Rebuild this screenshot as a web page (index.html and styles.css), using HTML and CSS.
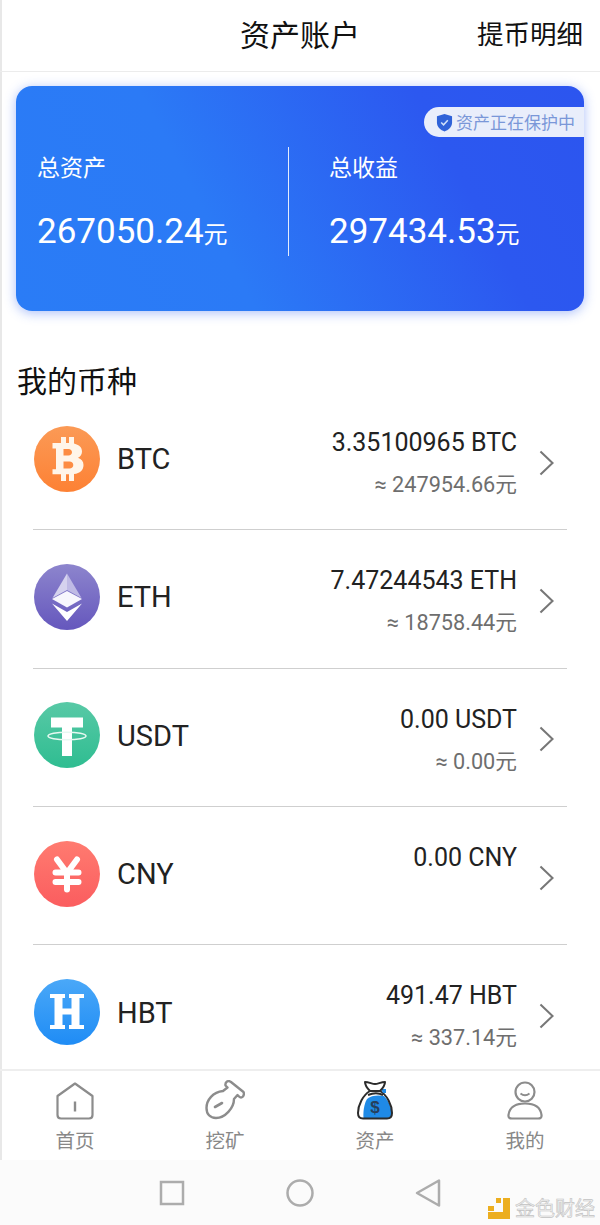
FILE: index.html
```html
<!DOCTYPE html>
<html lang="zh-CN">
<head>
    <meta charset="UTF-8">
    <meta name="viewport" content="width=device-width, initial-scale=1.0">
    <title>资产账户</title>
    <link rel="stylesheet" href="styles.css">
</head>
<body>
<div class="page">
    <div class="main">
        <header class="top-bar">
            <span></span>
            <h1 class="top-title">资产账户</h1>
            <a class="top-link">提币明细</a>
        </header>

        <section class="summary">
            <div class="guard">
                <svg class="guard-icon" viewBox="0 0 18 20">
                    <path d="M9 1 L17 3.5 V10 C17 15 13 18 9 19.5 C5 18 1 15 1 10 V3.5 Z" fill="#2f62d8"/>
                    <path d="M5.5 10 L8 12.5 L12.5 7.5" fill="none" stroke="#cfe0fa" stroke-width="1.6"/>
                </svg>
                <span>资产正在保护中</span>
            </div>
            <div class="summary-col first">
                <div class="summary-label">总资产</div>
                <div class="summary-value">267050.24<small>元</small></div>
            </div>
            <div class="summary-col second">
                <div class="summary-label">总收益</div>
                <div class="summary-value">297434.53<small>元</small></div>
            </div>
        </section>

        <h2 class="list-title">我的币种</h2>

        <div class="coins">
            <div class="coin">
                <svg class="coin-icon" viewBox="0 0 66 66">
                    <defs><linearGradient id="gBtc" x1="0" y1="0" x2="0" y2="1"><stop offset="0" stop-color="#fb9a56"/><stop offset="1" stop-color="#fd8134"/></linearGradient></defs>
                    <circle cx="33" cy="33" r="33" fill="url(#gBtc)"/>
                    <path d="M27 11h5v6h3v-6h5v6.5c6 1.5 8 4.5 8 8 0 3-1.500 5-4 6.300 3.500 1.200 5.500 3.700 5.500 7.200 0 5-3.500 8.500-9.500 9v7h-5v-6.800h-3V55h-5v-6.800H18.500v-5H22V22.500h-3.500V17H27z" fill="#fff5e9"/>
                    <path d="M29.500 23v6.500h5c2 0 3.500-1.200 3.500-3.200s-1.500-3.300-3.500-3.300zM29.500 35.500V42.500h6c2.200 0 3.800-1.400 3.800-3.500s-1.600-3.500-3.800-3.500z" fill="#fd8c42"/>
                </svg>
                <div class="coin-name">BTC</div>
                <div class="amounts">
                    <div class="amount">3.35100965 BTC</div>
                    <div class="worth">≈ 247954.66元</div>
                </div>
                <svg class="chevron" viewBox="0 0 16 28"><path d="M1.500 1.500 L14.500 14 L1.500 26.500"/></svg>
            </div>

            <div class="coin">
                <svg class="coin-icon" viewBox="0 0 66 66">
                    <defs><linearGradient id="gEth" x1="0" y1="0" x2="0" y2="1"><stop offset="0" stop-color="#8d85cd"/><stop offset="1" stop-color="#6557bd"/></linearGradient></defs>
                    <circle cx="33" cy="33" r="33" fill="url(#gEth)"/>
                    <path d="M33 9.500 L18.500 34 L33 26z" fill="#d5d2ee"/>
                    <path d="M33 9.500 L47.500 34 L33 26z" fill="#bfbae5"/>
                    <path d="M33 27 L18 35 L33 43.500 L48 35z" fill="#f7f6fd"/>
                    <path d="M18 39.500 L33 48 L48 39.500 L33 57z" fill="#fff"/>
                </svg>
                <div class="coin-name">ETH</div>
                <div class="amounts">
                    <div class="amount">7.47244543 ETH</div>
                    <div class="worth">≈ 18758.44元</div>
                </div>
                <svg class="chevron" viewBox="0 0 16 28"><path d="M1.500 1.500 L14.500 14 L1.500 26.500"/></svg>
            </div>

            <div class="coin">
                <svg class="coin-icon" viewBox="0 0 66 66">
                    <defs><linearGradient id="gUsdt" x1="0" y1="0" x2="0" y2="1"><stop offset="0" stop-color="#58c9a6"/><stop offset="1" stop-color="#2fbd91"/></linearGradient></defs>
                    <circle cx="33" cy="33" r="33" fill="url(#gUsdt)"/>
                    <path d="M17 15.500 H49 V25.500 H38 V54 H28 V25.500 H17z" fill="#fff"/>
                    <ellipse cx="33" cy="34" rx="19" ry="3.800" fill="none" stroke="#e6f8f1" stroke-width="1.500"/>
                </svg>
                <div class="coin-name">USDT</div>
                <div class="amounts">
                    <div class="amount">0.00 USDT</div>
                    <div class="worth">≈ 0.00元</div>
                </div>
                <svg class="chevron" viewBox="0 0 16 28"><path d="M1.500 1.500 L14.500 14 L1.500 26.500"/></svg>
            </div>

            <div class="coin">
                <svg class="coin-icon" viewBox="0 0 66 66">
                    <defs><linearGradient id="gCny" x1="0" y1="0" x2="0" y2="1"><stop offset="0" stop-color="#ff7b70"/><stop offset="1" stop-color="#fb5d5f"/></linearGradient></defs>
                    <circle cx="33" cy="33" r="33" fill="url(#gCny)"/>
                    <path d="M23 18.500 L33 32 L43 18.500 M33 32 V48.500 M21.500 31.500 H44.500 M21.500 41 H44.500" fill="none" stroke="#fff" stroke-width="6" stroke-linecap="round"/>
                </svg>
                <div class="coin-name">CNY</div>
                <div class="amounts">
                    <div class="amount">0.00 CNY</div>
                </div>
                <svg class="chevron" viewBox="0 0 16 28"><path d="M1.500 1.500 L14.500 14 L1.500 26.500"/></svg>
            </div>

            <div class="coin">
                <svg class="coin-icon" viewBox="0 0 66 66">
                    <defs><linearGradient id="gHbt" x1="0" y1="0" x2="0" y2="1"><stop offset="0" stop-color="#4aa8f8"/><stop offset="1" stop-color="#1f8cf5"/></linearGradient></defs>
                    <circle cx="33" cy="33" r="33" fill="url(#gHbt)"/>
                    <path d="M16 15 H31 V19 H28.500 V29.500 H37.500 V19 H35 V15 H50 V19 H45.500 V46 H50 V50 H35 V46 H37.500 V35.500 H28.500 V46 H31 V50 H16 V46 H20.500 V19 H16z" fill="#fff"/>
                </svg>
                <div class="coin-name">HBT</div>
                <div class="amounts">
                    <div class="amount">491.47 HBT</div>
                    <div class="worth">≈ 337.14元</div>
                </div>
                <svg class="chevron" viewBox="0 0 16 28"><path d="M1.500 1.500 L14.500 14 L1.500 26.500"/></svg>
            </div>
        </div>

        <nav class="tabs">
            <div class="tab">
                <svg class="tab-icon" viewBox="0 0 40 40">
                    <path d="M20 3.500 L37.500 16 V35 Q37.500 38.500 34 38.500 H6 Q2.500 38.500 2.500 35 V16 Z" fill="none" stroke="#8c8c8c" stroke-width="2.200" stroke-linejoin="round"/>
                    <path d="M20 21.500 V31.500" stroke="#8c8c8c" stroke-width="2.400"/>
                </svg>
                <span>首页</span>
            </div>
            <div class="tab">
                <svg class="tab-icon" viewBox="0 0 40 40">
                    <path d="M18 11 L22.500 7.500 L20.500 5.500 Q20 3 22 1.500 Q24 0.500 26 2 L38.500 12 Q39.500 14 38 16.500 Q36 18.500 34 16.500 L32.500 15 L29 19 C29 28 20 38 11 38 C5 38 1.500 34 1.500 28 C1.500 20 8 12 18 11z" fill="none" stroke="#8c8c8c" stroke-width="2.400" stroke-linejoin="round"/>
                    <path d="M10 27 L17 23" stroke="#8c8c8c" stroke-width="2.600" stroke-linecap="round"/>
                </svg>
                <span>挖矿</span>
            </div>
            <div class="tab">
                <svg class="tab-icon" viewBox="0 0 40 40">
                    <path d="M12 19 C9 24 8 32 8.500 38 H32 C35 38 36.500 36 36.500 33 C36.500 27 33 20 29 16 C24 15 16 15 12 19z" fill="#1f8ae6"/>
                    <path d="M15 11 C8 15 3 25 3 33 C3 36.500 5 38.500 8 38.500 H32 C35 38.500 37 36.500 37 33 C37 25 32 15 25 11" fill="none" stroke="#2b2b2b" stroke-width="2"/>
                    <path d="M13 15 C18 13 24 13 28 15" fill="none" stroke="#2b2b2b" stroke-width="2"/>
                    <path d="M26 9 L31 9 L31 13 L28 13z" fill="#1f8ae6"/>
                    <path d="M10 2 C14 2 17 4 20 4 C23 4 26 2 30 2 C30 6 27 9 25 11 H15 C13 9 10 6 10 2z" fill="#fff" stroke="#2b2b2b" stroke-width="2" stroke-linejoin="round"/>
                    <text class="bag-sign" x="20" y="32.500" text-anchor="middle">$</text>
                </svg>
                <span>资产</span>
            </div>
            <div class="tab">
                <svg class="tab-icon" viewBox="0 0 40 40">
                    <circle cx="20" cy="12" r="9.500" fill="none" stroke="#8c8c8c" stroke-width="2.200"/>
                    <path d="M15.500 13.500 Q20 17 24.500 13.500" fill="none" stroke="#8c8c8c" stroke-width="2"/>
                    <path d="M7 38.500 Q3 38.500 3.500 35 C4.500 27 11 23.500 20 23.500 C29 23.500 35.500 27 36.500 35 Q37 38.500 33 38.500z" fill="none" stroke="#8c8c8c" stroke-width="2.200" stroke-linejoin="round"/>
                </svg>
                <span>我的</span>
            </div>
        </nav>
    </div>

    <div class="sys-nav">
        <svg viewBox="0 0 28 28"><rect x="3" y="3" width="22" height="22"/></svg>
        <svg viewBox="0 0 28 28"><circle cx="14" cy="14" r="12.500"/></svg>
        <svg viewBox="0 0 28 28"><path d="M3 14 L25 1.500 V26.500 Z" stroke-linejoin="round"/></svg>
    </div>

    <div class="watermark">
        <svg viewBox="0 0 22 22">
            <path d="M15 0 H22 V21 H0 V14 H15 Z" fill="#ecae1f"/>
            <rect x="8" y="0" width="5" height="5" fill="#ecae1f"/>
            <rect x="0" y="8" width="6" height="5" fill="#ecae1f"/>
        </svg>
        <span>金色财经</span>
    </div>
</div>
</body>
</html>
```
FILE: styles.css
```css
* {
    box-sizing: border-box;
}

body {
    margin: 0;
    background: #fff;
    color: #1c1c1c;
    font-family: Roboto, "Noto Sans CJK SC", sans-serif;
}

.page {
    position: relative;
    width: 600px;
    height: 1225px;
    overflow: hidden;
    display: flex;
    flex-direction: column;
}

.main {
    flex: 1;
    min-height: 0;
    display: flex;
    flex-direction: column;
    box-shadow: inset 2px 0 #e8e8e8;
}

.top-bar {
    display: grid;
    grid-template-columns: 1fr auto 1fr;
    align-items: center;
    height: 72px;
    padding: 0 17px 6px 0;
    border-bottom: 1px solid #ececec;
    flex-shrink: 0;
}

.top-title {
    margin: 0 0 0 17px;
    font-size: 30px;
    font-weight: 400;
    color: #111;
}

.top-link {
    justify-self: end;
    font-size: 26.500px;
    color: #111;
}

.summary {
    position: relative;
    flex-shrink: 0;
    display: flex;
    height: 225px;
    margin: 14px 16px 0;
    border-radius: 16px;
    background: linear-gradient(62deg, #2a7cf6 0%, #2b7af6 35%, #2c58f0 75%, #2c55ef 100%);
    box-shadow: 0 2px 12px rgba(45, 95, 240, 0.4);
    color: #fff;
}

.guard {
    position: absolute;
    top: 21px;
    right: 0;
    display: flex;
    align-items: center;
    gap: 3px;
    width: 160px;
    height: 30px;
    padding: 0 0 2px 12px;
    border-radius: 15px 0 0 15px;
    background: #e9eefb;
    color: #7a97d8;
    font-size: 17px;
}

.guard-icon {
    width: 17px;
    height: 19px;
    margin-top: 2px;
}

.summary-col {
    margin-top: 61px;
    height: 109px;
}

.summary-col.first {
    width: 273px;
    padding-left: 21px;
    border-right: 1.500px solid #e4ecfd;
}

.summary-col.second {
    padding-left: 40px;
}

.summary-label {
    font-size: 23px;
    line-height: 44px;
}

.summary-value {
    margin-top: 20px;
    font-size: 35px;
    line-height: 42px;
    white-space: nowrap;
}

.summary-value small {
    font-size: 24px;
}

.list-title {
    flex-shrink: 0;
    margin: 61px 0 0 17px;
    font-size: 30px;
    font-weight: 400;
    line-height: 20px;
    color: #111;
}

.coins {
    flex: 1;
    min-height: 0;
    overflow: hidden;
    padding: 0 33px;
}

.coin {
    display: flex;
    align-items: center;
    height: 138.300px;
    padding-left: 1px;
    border-bottom: 1px solid #cfcfcf;
}

.coin:last-child {
    border-bottom: none;
}

.coin-icon {
    width: 66px;
    height: 66px;
    margin-bottom: 4px;
    flex-shrink: 0;
}

.coin-name {
    flex: 1;
    margin: 0 0 3px 17px;
    font-size: 29px;
    color: #222;
}

.amounts {
    align-self: flex-start;
    padding-top: 34px;
    text-align: right;
}

.amount {
    font-size: 25px;
    line-height: 34px;
    color: #222;
}

.worth {
    margin-top: 8px;
    font-size: 21.700px;
    line-height: 34px;
    color: #6e6e6e;
}

.chevron {
    width: 15px;
    height: 26px;
    margin: 4px 13px 0 22px;
    flex-shrink: 0;
    fill: none;
    stroke: #777;
    stroke-width: 2.200;
}

.tabs {
    display: flex;
    flex-shrink: 0;
    height: 91px;
    border-top: 2px solid #eeeeee;
}

.tab {
    flex: 1;
    display: flex;
    flex-direction: column;
    align-items: center;
    padding-top: 9px;
    font-size: 19.500px;
    color: #888;
}

.tab-icon {
    width: 40px;
    height: 40px;
}

.tab span {
    margin-top: 7px;
    line-height: 30px;
}

.bag-sign {
    font-family: "Liberation Sans", sans-serif;
    font-size: 17px;
    font-weight: 700;
    fill: #263f5c;
}

.sys-nav {
    flex-shrink: 0;
    display: flex;
    justify-content: center;
    align-items: center;
    gap: 100px;
    height: 65px;
    background: #fbfbfb;
}

.sys-nav svg {
    width: 28px;
    height: 28px;
    fill: none;
    stroke: #acacac;
    stroke-width: 2.500;
}

.watermark {
    position: absolute;
    right: 5px;
    bottom: 5px;
    display: flex;
    align-items: center;
    gap: 5px;
}

.watermark svg {
    width: 22px;
    height: 22px;
}

.watermark span {
    font-size: 20px;
    line-height: 22px;
    color: #f2f2f2;
    -webkit-text-stroke: 0.600px #c2c2c2;
}
```
